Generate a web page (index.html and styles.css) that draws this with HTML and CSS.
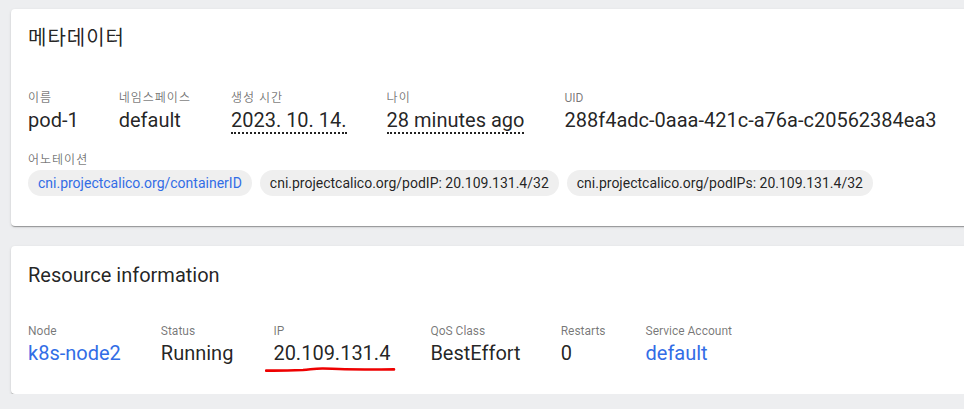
FILE: index.html
```html
<!DOCTYPE html>
<html lang="ko">
<head>
<meta charset="utf-8">
<title>Pod</title>
<link rel="stylesheet" href="styles.css">
</head>
<body>
<div class="page">
  <section class="card card-meta">
    <h2 class="card-title ko">메타데이터</h2>
    <div class="props">
      <div class="prop">
        <div class="label ko">이름</div>
        <div class="value">pod-1</div>
      </div>
      <div class="prop">
        <div class="label ko">네임스페이스</div>
        <div class="value">default</div>
      </div>
      <div class="prop">
        <div class="label ko">생성 시간</div>
        <div class="value"><span class="dotted">2023. 10. 14.</span></div>
      </div>
      <div class="prop">
        <div class="label ko">나이</div>
        <div class="value"><span class="dotted">28 minutes ago</span></div>
      </div>
      <div class="prop">
        <div class="label">UID</div>
        <div class="value">288f4adc-0aaa-421c-a76a-c20562384ea3</div>
      </div>
    </div>
    <div class="annotations">
      <div class="label ko">어노테이션</div>
      <div class="chips">
        <span class="chip chip-link">cni.projectcalico.org/containerID</span>
        <span class="chip">cni.projectcalico.org/podIP: 20.109.131.4/32</span>
        <span class="chip">cni.projectcalico.org/podIPs: 20.109.131.4/32</span>
      </div>
    </div>
  </section>

  <section class="card card-resource">
    <h2 class="card-title">Resource information</h2>
    <div class="props">
      <div class="prop">
        <div class="label">Node</div>
        <div class="value link">k8s-node2</div>
      </div>
      <div class="prop">
        <div class="label">Status</div>
        <div class="value">Running</div>
      </div>
      <div class="prop prop-marked">
        <div class="label">IP</div>
        <div class="value">20.109.131.4</div>
        <svg class="scribble" width="132" height="10" viewBox="0 0 132 10" aria-hidden="true">
          <path d="M1 5.6 C 14 5.8, 28 5.4, 38 5 C 46 4.4, 50 3.4, 58 3.5 C 66 3.6, 70 4.2, 80 4.2 C 96 4.4, 114 4.6, 129 4.4" fill="none" stroke="#ee0000" stroke-width="2.6" stroke-linecap="round"/>
        </svg>
      </div>
      <div class="prop">
        <div class="label">QoS Class</div>
        <div class="value">BestEffort</div>
      </div>
      <div class="prop">
        <div class="label">Restarts</div>
        <div class="value">0</div>
      </div>
      <div class="prop">
        <div class="label">Service Account</div>
        <div class="value link">default</div>
      </div>
    </div>
  </section>
</div>
</body>
</html>
```

FILE: styles.css
```css
html, body {
  margin: 0;
  padding: 0;
  overflow: hidden;
  background: #edeef0;
}

body {
  font-family: Roboto, "Noto Sans CJK KR", sans-serif;
  color: rgba(0, 0, 0, 0.87);
}

.page {
  width: 1000px;
  padding: 9px 0 0 11px;
  display: flex;
  flex-direction: column;
  gap: 20px;
}

.card {
  background: #ffffff;
  border-radius: 4px;
  box-shadow: 0 2px 1px -1px rgba(0, 0, 0, 0.2),
              0 1px 1px 0 rgba(0, 0, 0, 0.14),
              0 1px 3px 0 rgba(0, 0, 0, 0.12);
  padding: 13px 17px 29px 17px;
}

.card-title {
  margin: 0;
  font-size: 20px;
  line-height: 32px;
  font-weight: 400;
  color: rgba(0, 0, 0, 0.87);
}

.ko {
  letter-spacing: 1px;
}

.props {
  display: flex;
  gap: 40px;
  margin-top: 32px;
}

.card-meta .props {
  margin-top: 36px;
}

.prop {
  display: flex;
  flex-direction: column;
}

.prop-marked {
  position: relative;
}

.label {
  font-size: 12px;
  line-height: 16px;
  color: rgba(0, 0, 0, 0.54);
  margin-bottom: 2px;
  white-space: nowrap;
}

.value {
  font-size: 20px;
  line-height: 24px;
  color: rgba(0, 0, 0, 0.87);
  white-space: nowrap;
}

.link {
  color: #326de6;
}

.dotted {
  border-bottom: 2px dotted rgba(0, 0, 0, 0.87);
}

.annotations {
  margin-top: 20px;
  margin-bottom: 1px;
}

.chips {
  display: flex;
  gap: 8px;
}

.chip {
  display: inline-block;
  height: 26px;
  line-height: 26px;
  padding: 0 10px;
  border-radius: 13px;
  background: #efefef;
  font-size: 14px;
  color: rgba(0, 0, 0, 0.87);
  white-space: nowrap;
}

.chip-link {
  color: #326de6;
}

.scribble {
  position: absolute;
  left: -8px;
  top: 100%;
}
```
